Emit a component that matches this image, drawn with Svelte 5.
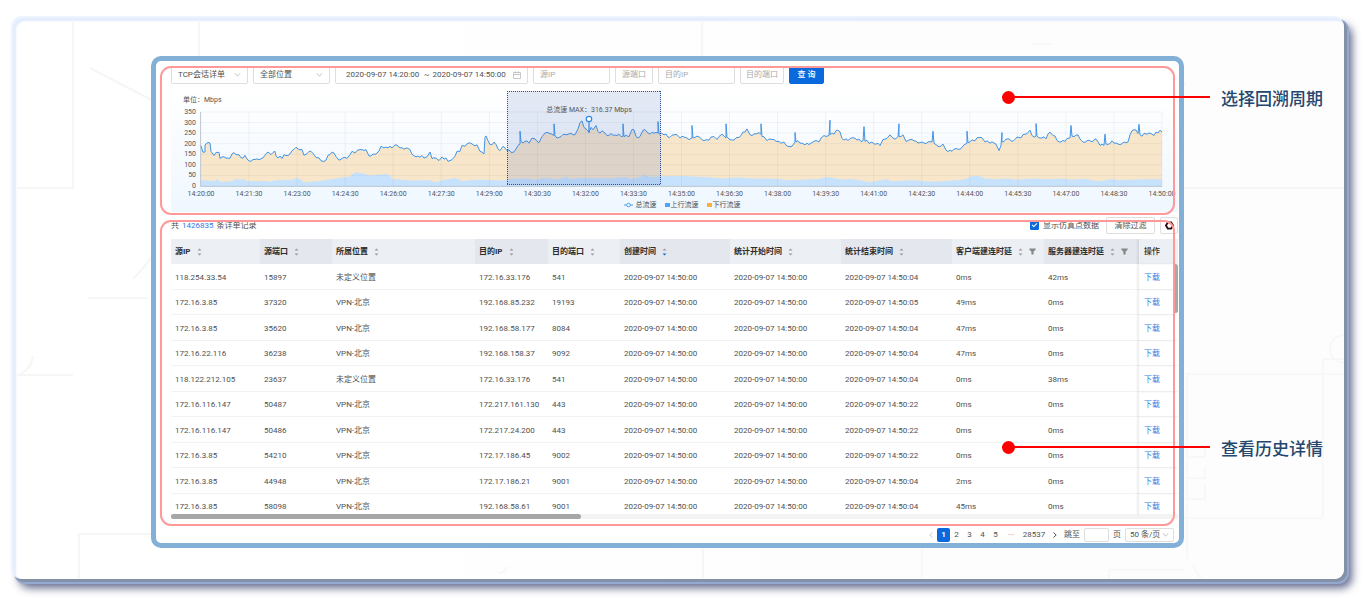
<script lang="ts">
  type Point = [number, number]

  interface Column {
    key: string
    label: string
    width: number
    sorted?: boolean
    filter?: boolean
  }

  const columns: Column[] = [
    { key: 'srcIp', label: '源IP', width: 89 },
    { key: 'srcPort', label: '源端口', width: 72 },
    { key: 'location', label: '所属位置', width: 143 },
    { key: 'dstIp', label: '目的IP', width: 73 },
    { key: 'dstPort', label: '目的端口', width: 72 },
    { key: 'created', label: '创建时间', width: 110, sorted: true },
    { key: 'begin', label: '统计开始时间', width: 111 },
    { key: 'end', label: '统计结束时间', width: 111 },
    { key: 'client', label: '客户端建连时延', width: 92, filter: true },
    { key: 'server', label: '服务器建连时延', width: 95, filter: true }
  ]

  const START = '2020-09-07 14:50:00'

  // source ip, source port, location, target ip, target port, end second, client delay, server delay
  const sessions: [string, number, string, string, number, string, number, number][] = [
    ['118.254.33.54', 15897, '未定义位置', '172.16.33.176', 541, '04', 0, 42],
    ['172.16.3.85', 37320, 'VPN-北京', '192.168.85.232', 19193, '05', 49, 0],
    ['172.16.3.85', 35620, 'VPN-北京', '192.168.58.177', 8084, '04', 47, 0],
    ['172.16.22.116', 36238, 'VPN-北京', '192.168.158.37', 9092, '04', 47, 0],
    ['118.122.212.105', 23637, '未定义位置', '172.16.33.176', 541, '04', 0, 38],
    ['172.16.116.147', 50487, 'VPN-北京', '172.217.161.130', 443, '22', 0, 0],
    ['172.16.116.147', 50486, 'VPN-北京', '172.217.24.200', 443, '22', 0, 0],
    ['172.16.3.85', 54210, 'VPN-北京', '172.17.186.45', 9002, '22', 0, 0],
    ['172.16.3.85', 44948, 'VPN-北京', '172.17.186.21', 9001, '04', 2, 0],
    ['172.16.3.85', 58098, 'VPN-北京', '192.168.58.61', 9001, '04', 45, 0]
  ]

  const rows = sessions.map(([srcIp, srcPort, location, dstIp, dstPort, sec, client, server]) => [
    srcIp,
    srcPort,
    location,
    dstIp,
    dstPort,
    START,
    START,
    `2020-09-07 14:50:${sec}`,
    `${client}ms`,
    `${server}ms`
  ])

  // total rate, [offset along the time axis, Mbps]
  const total: Point[] = [
    [0,190],[2,160],[4,161],[4,195],[7,206],[9,203],[10,164],[13,144],[15,159],[18,159],[19,130],[29,131],
    [31,152],[38,148],[40,134],[44,145],[50,117],[58,125],[63,138],[67,161],[70,148],[74,164],[75,142],[81,130],
    [83,148],[89,152],[91,167],[95,183],[98,172],[101,172],[103,145],[106,153],[110,164],[113,148],[118,133],
    [123,116],[127,145],[133,156],[135,139],[138,122],[146,130],[149,148],[151,164],[154,156],[161,172],[165,172],
    [168,142],[176,156],[180,188],[183,180],[191,180],[194,195],[199,180],[206,180],[209,172],[213,144],[219,136],
    [226,138],[229,161],[231,130],[238,120],[241,138],[243,127],[249,120],[254,141],[256,164],[259,164],[261,192],
    [264,188],[270,202],[276,195],[279,164],[283,152],[284,230],[285,237],[287,214],[291,195],[293,208],[299,167],
    [302,188],[306,167],[314,167],[317,192],[319,198],[319,259],[320,211],[324,211],[328,203],[331,227],[334,223],
    [338,205],[341,233],[344,250],[349,248],[353,238],[353,294],[354,238],[358,230],[366,242],[374,242],[377,270],
    [379,300],[381,308],[383,277],[386,266],[388,255],[390,277],[392,266],[395,286],[397,258],[404,250],[406,238],
    [410,248],[416,239],[422,236],[422,294],[423,233],[428,233],[431,267],[433,266],[435,234],[439,234],[442,264],
    [446,255],[449,245],[457,252],[457,305],[458,245],[463,242],[469,230],[473,242],[479,227],[486,227],[491,227],
    [491,286],[492,227],[496,236],[501,220],[508,217],[513,234],[516,220],[521,245],[525,227],[525,294],[526,233],
    [533,217],[538,230],[542,255],[546,270],[549,242],[556,248],[560,245],[560,294],[561,234],[566,214],[573,220],
    [578,211],[583,208],[589,186],[594,208],[594,253],[595,208],[601,203],[604,195],[613,211],[618,208],[623,239],
    [628,239],[629,311],[629,242],[633,245],[637,264],[643,217],[650,227],[656,217],[662,214],[663,281],[664,211],
    [671,208],[679,191],[682,220],[689,242],[692,227],[697,233],[698,294],[698,233],[702,242],[705,211],[713,214],
    [721,208],[731,208],[732,259],[733,202],[737,188],[742,198],[745,170],[751,164],[758,173],[763,195],[766,202],
    [766,259],[767,205],[774,214],[779,230],[784,208],[789,203],[795,198],[798,167],[800,192],[801,253],[801,208],
    [808,223],[812,211],[818,230],[824,245],[829,264],[831,239],[835,236],[835,295],[836,236],[841,227],[845,223],
    [849,255],[852,239],[858,208],[864,211],[869,227],[870,286],[871,236],[877,242],[882,208],[888,217],[896,217],
    [899,192],[903,192],[904,245],[905,198],[911,214],[916,202],[923,208],[927,208],[929,242],[933,266],[937,248],
    [938,292],[939,242],[946,245],[953,239],[959,264],[961,255]
  ]

  // upstream rate
  const upstream: Point[] = [
    [0,28],[14,23],[16,33],[20,19],[32,24],[34,33],[40,30],[42,34],[46,22],[65,24],[70,20],[74,27],[92,30],[95,39],
    [99,33],[103,18],[118,24],[122,26],[130,32],[149,45],[151,56],[155,66],[159,62],[164,58],[168,50],[185,57],
    [189,50],[191,33],[205,28],[212,25],[228,28],[234,18],[241,27],[254,38],[259,30],[262,22],[270,28],[280,30],
    [300,26],[310,32],[314,36],[318,32],[323,37],[335,30],[342,38],[357,32],[365,43],[369,33],[380,38],[410,36],
    [424,42],[430,33],[440,42],[443,53],[449,42],[460,46],[480,48],[504,42],[522,36],[536,40],[552,36],[575,34],
    [588,27],[600,30],[620,34],[625,42],[641,31],[650,33],[662,25],[668,18],[686,32],[690,22],[705,26],[715,27],
    [722,22],[735,20],[758,28],[765,33],[770,46],[778,48],[784,36],[794,32],[806,35],[815,30],[832,35],[850,32],
    [860,35],[870,30],[882,34],[898,22],[910,32],[918,28],[930,30],[945,32],[961,32]
  ]

  const LEFT = 30
  const BASE = 96
  const WIDTH = 961

  const x = (offset: number): number => LEFT + offset
  const y = (rate: number): number => BASE - (rate * 74) / 350

  // small ripple between two samples so that long stretches are not ruler-straight
  function ripple(points: Point[]): Point[] {
    const out: Point[] = [points[0]]
    for (let i = 1; i < points.length; i++) {
      const [x0, v0] = points[i - 1]
      const [x1, v1] = points[i]
      for (let p = x0 + 2; p < x1 - 1; p += 2) {
        const t = (p - x0) / (x1 - x0)
        out.push([p, v0 + (v1 - v0) * t + Math.sin(p * p) * 8])
      }
      out.push(points[i])
    }
    return out
  }

  const totalLine = 'M' + ripple(total).map(([o, v]) => `${x(o)} ${y(v).toFixed(1)}`).join('L')
  const totalArea = `${totalLine}V${BASE}H${LEFT}Z`
  const upArea =
    `M${LEFT} ${BASE}` + upstream.map(([o, v]) => `L${x(o)} ${y(v).toFixed(1)}`).join('') + `V${BASE}Z`

  const rates = [0, 50, 100, 150, 200, 250, 300, 350]
  const times = Array.from({ length: 21 }, (_, i) => {
    const seconds = 20 * 60 + i * 90
    const mm = String(Math.floor(seconds / 60)).padStart(2, '0')
    const ss = String(seconds % 60).padStart(2, '0')
    return { label: `14:${mm}:${ss}`, at: LEFT + (WIDTH * i) / 20 }
  })

  let session = $state('TCP会话详单')
  let place = $state('全部位置')
  let from = $state('2020-09-07 14:20:00')
  let to = $state('2020-09-07 14:50:00')
  let showSimulated = $state(true)
  let page = $state(1)
  let pageSize = $state('50 条/页')
</script>

{#snippet chevron()}
  <svg class="chevron" viewBox="0 0 8 6" aria-hidden="true"><path d="M1 1l3 3.4L7 1" /></svg>
{/snippet}

<main>
  <div class="card">
    <svg class="backdrop" viewBox="0 0 1331 561" preserveAspectRatio="none" aria-hidden="true">
      <g class="soft">
        <path d="M60 4V170H4M186 4V50M77 50L150 88M689 4V40M66 561V516H270V490M193 490V514H178" />
        <path d="M20 338q-2 14-13 18M4 357h56M164 185q-8 40-44 76M75 280h60" />
        <path d="M690 530V561M486 555q6 0 8-6M1171 170H1331M1155 64q10 8 18 1" />
      </g>
      <g class="edge">
        <path d="M1192 427v12h-20M1192 448v12h-20M1192 467v14h-20M1331 356H1174V541" />
        <path d="M1171 500H1307q3 0 3-4V341h21M1096 561V552H1171M1180 548l8 13M909 530V561M1018 26H1040" />
        <circle cx="1331" cy="331" r="14" />
      </g>
    </svg>

    <div class="screen">
      <section class="framed period">
        <form class="filters" onsubmit={(e) => e.preventDefault()}>
          <div class="select wide">
            <select aria-label="详单类型" bind:value={session}><option>TCP会话详单</option></select>
            {@render chevron()}
          </div>
          <div class="select wide">
            <select aria-label="位置" bind:value={place}><option>全部位置</option></select>
            {@render chevron()}
          </div>
          <div class="range">
            <input type="text" aria-label="开始时间" bind:value={from} />
            <span>~</span>
            <input type="text" aria-label="结束时间" bind:value={to} />
            <svg class="calendar" viewBox="0 0 8 8" aria-hidden="true">
              <path d="M.5 1.5h7v6h-7zM.5 3.5h7M2.5 .3v2M5.5 .3v2" />
            </svg>
          </div>
          <input class="box wide" type="text" aria-label="源IP" placeholder="源IP" />
          <input class="box port" type="text" aria-label="源端口" placeholder="源端口" />
          <input class="box wide" type="text" aria-label="目的IP" placeholder="目的IP" />
          <input class="box target-port" type="text" aria-label="目的端口" placeholder="目的端口" />
          <button class="query" type="submit">查 询</button>
        </form>

        <div class="chart">
          <svg class="plot" viewBox="0 0 1007 109" role="img" aria-label="流速">
            <text class="unit" x="12" y="12">单位：Mbps</text>
            <path class="area-total" d={totalArea} />
            <path class="area-up" d={upArea} />
            {#each rates as rate}
              <line class="grid" x1={LEFT} x2={LEFT + WIDTH} y1={y(rate)} y2={y(rate)} />
              <text class="tick" x="25" y={y(rate) + 2} text-anchor="end">{rate}</text>
            {/each}
            {#each times as time}
              <line class="grid" x1={time.at} x2={time.at} y1="22" y2={BASE} />
              <text class="tick" x={time.at} y="106" text-anchor="middle">{time.label}</text>
            {/each}
            <path class="axis" d="M29.500 22V96.500H991" />
            <path class="line-total" d={totalLine} />
            <rect class="brush-fill" x="336" y="1" width="154" height="94" />
            <path class="brush" d="M336 1.500H490M336 94.500H490M336.500 1V95M489.500 1V95" />
            <path class="pin" d="M418 32v11" />
            <circle class="pin" cx="418" cy="29" r="2.7" />
            <text class="unit" x="418" y="22" text-anchor="middle">总流速 MAX：316.37 Mbps</text>
          </svg>
          <ul class="legend">
            <li>
              <svg viewBox="0 0 9 6" aria-hidden="true"><path d="M0 3h9" /><circle cx="4.5" cy="3" r="1.8" /></svg>
              总流速
            </li>
            <li><i class="up"></i>上行流速</li>
            <li><i class="down"></i>下行流速</li>
          </ul>
        </div>
      </section>

      <section class="framed history">
        <div class="toolbar">
          <p>共 <b>1426835</b> 条详单记录</p>
          <label><input type="checkbox" bind:checked={showSimulated} />显示仿真点数据</label>
          <button type="button" class="clear">清除过滤</button>
          <button type="button" class="settings" aria-label="设置">
            <svg viewBox="0 0 10 10" aria-hidden="true">
              <path d="M3.2 1.6h3.6L9 5 6.8 8.4H3.2L1 5z" />
            </svg>
          </button>
        </div>

        <div class="viewport">
          <table>
            <colgroup>
              {#each columns as column}
                <col style:width="{column.width}px" />
              {/each}
              <col class="action-col" />
            </colgroup>
            <thead>
              <tr>
                {#each columns as column}
                  <th scope="col">
                    <span class="head">
                      {column.label}
                      <svg class="sort" class:sorted={column.sorted} viewBox="0 0 5 8" aria-hidden="true">
                        <path d="M.5 2.6L2.5 .4l2 2.2z" />
                        <path class="desc" d="M.5 5.4l2 2.2 2-2.2z" />
                      </svg>
                      {#if column.filter}
                        <svg class="funnel" viewBox="0 0 7 7" aria-hidden="true">
                          <path d="M.3 .6h6.4v1L4.6 3.8v2.8H2.4V3.8L.3 1.6z" />
                        </svg>
                      {/if}
                    </span>
                  </th>
                {/each}
                <th scope="col" class="action">操作</th>
              </tr>
            </thead>
            <tbody>
              {#each rows as row}
                <tr>
                  {#each row as cell}
                    <td>{cell}</td>
                  {/each}
                  <td class="action"><a href="#download">下载</a></td>
                </tr>
              {/each}
            </tbody>
          </table>
          <span class="scroll-y"></span>
        </div>
        <div class="scroll-x"><span></span></div>
      </section>

      <nav class="pager" aria-label="分页">
        <button type="button" class="arrow prev" aria-label="上一页">
          <svg viewBox="0 0 6 8" aria-hidden="true"><path d="M4.5 1.5L1.8 4l2.7 2.5" /></svg>
        </button>
        {#each [1, 2, 3, 4, 5] as n}
          <button type="button" class:current={page === n} onclick={() => (page = n)}>{n}</button>
        {/each}
        <span class="dots">•••</span>
        <button type="button" class="last" onclick={() => (page = 28537)}>28537</button>
        <button type="button" class="arrow" aria-label="下一页">
          <svg viewBox="0 0 6 8" aria-hidden="true"><path d="M1.5 1.5L4.2 4 1.5 6.5" /></svg>
        </button>
        <label>跳至 <input type="text" /> 页</label>
        <div class="select size">
          <select aria-label="每页条数" bind:value={pageSize}><option>50 条/页</option></select>
          {@render chevron()}
        </div>
      </nav>
    </div>

    <div class="callout first"><i></i><span>选择回溯周期</span></div>
    <div class="callout second"><i></i><span>查看历史详情</span></div>
  </div>
</main>

<style>
  :global(body) {
    background: #fff;
  }

  main {
    padding: 18px 19px 19px 13px;
    font-family: Roboto, 'Noto Sans CJK SC', sans-serif;
    font-size: 8px;
    line-height: 12px;
    color: #505050;
  }

  main *,
  main *::after {
    box-sizing: border-box;
  }

  .card {
    position: relative;
    padding: 38px 160px 31px 138px;
    border-radius: 9px;
    background: linear-gradient(90deg, #fff 20%, #fdfdfd 70%);
    box-shadow:
      inset 3px 3px 2px #e2edfe,
      -1px -1px 0 1px #edf4fe,
      2px 2px 0 1px #8490a6,
      3px 3px 0 2px #94a9d0,
      7px 8px 8px 1px rgba(45, 55, 100, 0.75);
  }

  .backdrop {
    position: absolute;
    inset: 0;
    width: 100%;
    height: 100%;
    border-radius: 9px;
    fill: none;
  }

  .soft {
    stroke: #f6f6f6;
    stroke-width: 2;
  }

  .edge {
    stroke: #f8f8f8;
    stroke-width: 2;
  }

  .screen {
    position: relative;
    padding: 5px 1px 1px 15px;
    border: 5px solid #83b0d6;
    border-radius: 10px;
    background: #fff;
  }

  .framed {
    position: relative;
  }

  .framed::after {
    content: '';
    position: absolute;
    inset: 0 3px -3px -11px;
    border: 2px solid #ff9999;
    border-radius: 11px;
    pointer-events: none;
  }

  .history::after {
    inset: 3px 3px -7px -11px;
  }

  input,
  select,
  button {
    margin: 0;
    padding: 0;
    font: inherit;
    color: inherit;
    outline: none;
  }

  button {
    border: 1px solid #dedede;
    border-radius: 2px;
    background: #fff;
    cursor: pointer;
  }

  .filters {
    display: flex;
    gap: 5px;
    height: 18px;
  }

  .box,
  .range,
  .select {
    min-width: 0;
    border: 1px solid #dedede;
    border-radius: 2px;
    background: #fff;
  }

  .box {
    padding: 0 6px;
  }

  .box::placeholder {
    color: #aaa;
    opacity: 1;
  }

  .wide {
    width: 77px;
  }

  .port {
    width: 38px;
  }

  .target-port {
    width: 44px;
    padding: 0 5px;
  }

  .select {
    display: flex;
    align-items: center;
    padding: 0 6px;
  }

  .select select {
    flex: 1;
    min-width: 0;
    height: 100%;
    border: 0;
    background: none;
    appearance: none;
  }

  .chevron {
    width: 7px;
    height: 6px;
    fill: none;
    stroke: #bbb;
    pointer-events: none;
  }

  .range {
    display: flex;
    align-items: center;
    gap: 3px;
    width: 193px;
    padding: 0 6px 0 10px;
  }

  .range input {
    width: 75px;
    border: 0;
    background: none;
  }

  .calendar {
    width: 8px;
    height: 8px;
    margin-left: auto;
    fill: none;
    stroke: #bbb;
    stroke-width: 0.8;
  }

  .query {
    width: 35px;
    border-color: #0a69dc;
    background: #0a69dc;
    color: #fff;
    font-weight: 500;
  }

  .chart {
    height: 122px;
    margin-top: 6px;
    background: linear-gradient(#fff, #eff7ff);
  }

  .plot {
    display: block;
    width: 100%;
  }

  .tick,
  .unit {
    font-size: 7px;
    fill: #555;
  }

  .grid {
    stroke: rgba(80, 100, 120, 0.07);
  }

  .axis {
    fill: none;
    stroke: #c3cbd4;
  }

  .area-total {
    fill: #f8e6cb;
  }

  .area-up {
    fill: #c7e2fc;
  }

  .line-total {
    fill: none;
    stroke: #4095e8;
    stroke-linejoin: round;
  }

  .brush-fill {
    fill: rgba(75, 110, 190, 0.15);
  }

  .brush {
    fill: none;
    stroke: #2f519c;
    stroke-dasharray: 1 1;
    shape-rendering: crispEdges;
  }

  .pin {
    fill: #fff;
    stroke: #2d8ae6;
    stroke-width: 1.2;
  }

  .legend {
    display: flex;
    justify-content: center;
    gap: 8px;
    margin: 0;
    padding: 0 0 0 15px;
    list-style: none;
    font-size: 7px;
  }

  .legend li {
    display: flex;
    align-items: center;
    gap: 1px;
  }

  .legend svg {
    width: 9px;
    height: 6px;
    margin-right: 2px;
    fill: #fff;
    stroke: #4d9ff0;
  }

  .legend i {
    width: 5px;
    height: 4px;
    background: #4da3f5;
  }

  .legend .down {
    background: #fbb03b;
  }

  .history {
    margin-top: 5px;
  }

  .toolbar {
    display: flex;
    align-items: center;
    gap: 5px;
    height: 17px;
    margin-bottom: 5px;
  }

  .toolbar p {
    margin: 0 auto 0 0;
  }

  .toolbar b {
    margin: 0 1px;
    font-weight: 400;
    color: #2f7be6;
  }

  .toolbar label {
    display: flex;
    align-items: center;
    gap: 4px;
    margin-right: 2px;
  }

  .toolbar input {
    position: relative;
    width: 9px;
    height: 9px;
    border-radius: 1px;
    border: 1px solid #0a69dc;
    appearance: none;
  }

  .toolbar input:checked {
    background: #0a69dc;
  }

  .toolbar input:checked::after {
    content: '';
    position: absolute;
    top: 0;
    left: 2px;
    width: 3px;
    height: 5px;
    border: solid #fff;
    border-width: 0 1px 1px 0;
    transform: rotate(45deg);
  }

  .clear {
    width: 49px;
    height: 17px;
  }

  .settings {
    display: grid;
    place-items: center;
    width: 18px;
    height: 17px;
  }

  .settings svg {
    width: 9px;
    height: 9px;
    fill: #fff;
    stroke: #2a0a0a;
    stroke-width: 2;
  }

  .viewport {
    position: relative;
    height: 275px;
    overflow: hidden;
  }

  table {
    width: 100%;
    table-layout: fixed;
    border-collapse: separate;
    border-spacing: 0;
  }

  .action-col {
    width: 39px;
  }

  th,
  td {
    height: 25px;
    padding: 0 0 0 4px;
    text-align: left;
    white-space: nowrap;
  }

  tbody tr:nth-child(odd) td {
    height: 26px;
  }

  th {
    background: #eceff3;
    color: #2c2c2c;
    font-weight: 700;
  }

  th:nth-child(even) {
    background: #e4e7ed;
  }

  td {
    padding-top: 2px;
    border-bottom: 1px solid #f1f4f5;
  }

  .action {
    padding-left: 5px;
    box-shadow: -2px 0 2px rgba(0, 0, 0, 0.07);
  }

  th.action {
    font-weight: 500;
  }

  .head {
    display: flex;
    align-items: center;
    gap: 6px;
  }

  .sort {
    width: 5px;
    height: 8px;
    fill: #999;
  }

  .sorted .desc {
    fill: #0a69dc;
  }

  .funnel {
    width: 7px;
    height: 7px;
    fill: #888;
  }

  a {
    color: #2f80e0;
    text-decoration: none;
  }

  .scroll-y {
    position: absolute;
    top: 25px;
    right: 0;
    width: 5px;
    height: 49px;
    border-radius: 3px;
    background: #a8a8a8;
  }

  .scroll-x {
    height: 5px;
    background: #f3f3f3;
  }

  .scroll-x span {
    display: block;
    width: 410px;
    height: 100%;
    border-radius: 3px;
    background: #a6a6a6;
  }

  .pager {
    display: flex;
    align-items: center;
    justify-content: flex-end;
    height: 14px;
    margin-top: 9px;
    padding-right: 4px;
  }

  .pager button {
    display: grid;
    place-items: center;
    width: 13px;
    height: 14px;
    border: 0;
    background: none;
  }

  .pager .current {
    background: #0a69dc;
    color: #fff;
    font-weight: 700;
  }

  .pager .arrow svg {
    width: 6px;
    height: 8px;
    fill: none;
    stroke: #555;
  }

  .pager .prev svg {
    stroke: #ccc;
  }

  .dots {
    width: 18px;
    font-size: 6px;
    text-align: center;
    color: #bbb;
  }

  .pager .last {
    width: 28px;
  }

  .pager label {
    display: flex;
    align-items: center;
    gap: 4px;
    margin: 0 4px 0 3px;
  }

  .pager input {
    width: 25px;
    height: 14px;
    border: 1px solid #dedede;
    border-radius: 2px;
  }

  .size {
    width: 49px;
    height: 14px;
    padding: 0 4px;
  }

  .callout {
    position: absolute;
    right: 21px;
    display: flex;
    align-items: center;
    gap: 11px;
    font-size: 17px;
    line-height: 24px;
    font-weight: 500;
    color: #24476f;
  }

  .callout span {
    padding-top: 4px;
  }

  .first {
    top: 65px;
  }

  .second {
    top: 415px;
  }

  .callout i {
    display: flex;
    align-items: center;
    width: 208px;
    height: 2px;
    background: #f00;
  }

  .callout i::before {
    content: '';
    width: 13px;
    height: 13px;
    flex: none;
    border-radius: 50%;
    background: #f00;
  }
</style>
